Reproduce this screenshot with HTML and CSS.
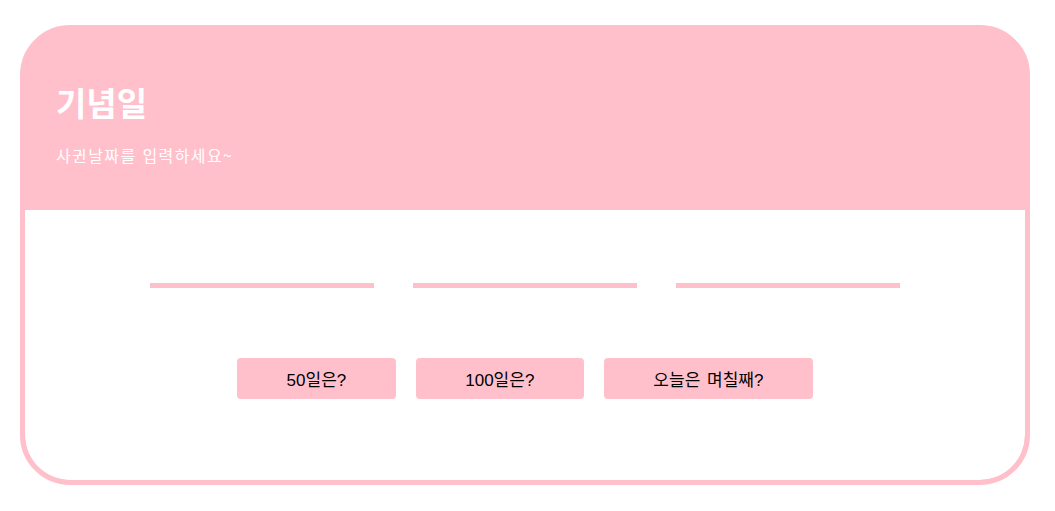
FILE: index.html
```html
<!DOCTYPE html>
<html lang="ko">
<head>
<meta charset="utf-8">
<title>기념일</title>
<link rel="stylesheet" href="styles.css">
</head>
<body>
<div class="card">
  <header class="card-header">
    <h1 class="title">기념일</h1>
    <p class="subtitle">사귄날짜를 입력하세요~</p>
  </header>
  <section class="card-body">
    <div class="inputs">
      <input class="date-input" type="text">
      <input class="date-input" type="text">
      <input class="date-input" type="text">
    </div>
    <div class="buttons">
      <button class="btn">50일은?</button>
      <button class="btn">100일은?</button>
      <button class="btn">오늘은 며칠째?</button>
    </div>
  </section>
</div>
</body>
</html>
```
FILE: styles.css
```css
* { box-sizing: border-box; }
html, body { margin: 0; padding: 0; background: #fff; }
body {
  font-family: "Liberation Sans", "Noto Sans CJK KR", sans-serif;
}
.card {
  margin: 25px 25px 0 20px;
  width: 1010px;
  height: 460px;
  border: 5px solid #ffc0cb;
  border-radius: 50px;
  overflow: hidden;
  background: #ffc0cb;
  display: flex;
  flex-direction: column;
}
.card-header {
  background: #ffc0cb;
  height: 180px;
  padding: 52px 30px 0 31px;
  color: #fff;
}
.title {
  margin: 0;
  font-family: "Noto Sans CJK KR", sans-serif;
  font-size: 33px;
  line-height: 40px;
  font-weight: 700;
}
.subtitle {
  margin: 23px 0 0 0;
  font-family: "Noto Sans CJK KR", sans-serif;
  font-size: 16px;
  line-height: 20px;
  letter-spacing: 1.4px;
}
.card-body {
  flex: 1;
  background: #fff;
  border-radius: 0 0 45px 45px;
  padding-top: 43px;
  display: flex;
  flex-direction: column;
  align-items: center;
}
.inputs {
  display: flex;
  gap: 39px;
  justify-content: center;
}
.date-input {
  width: 224px;
  height: 35px;
  border: none;
  border-bottom: 5px solid #ffc0cb;
  outline: none;
  background: transparent;
  padding: 0;
}
.buttons {
  margin-top: 70px;
  display: flex;
  gap: 20px;
  justify-content: center;
}
.btn {
  height: 41px;
  padding: 0 49.5px;
  border: none;
  border-radius: 4px;
  background: #ffc0cb;
  color: #000;
  font-family: "Liberation Sans", "Noto Sans CJK KR", sans-serif;
  font-size: 17px;
  word-spacing: 2px;
}
```
